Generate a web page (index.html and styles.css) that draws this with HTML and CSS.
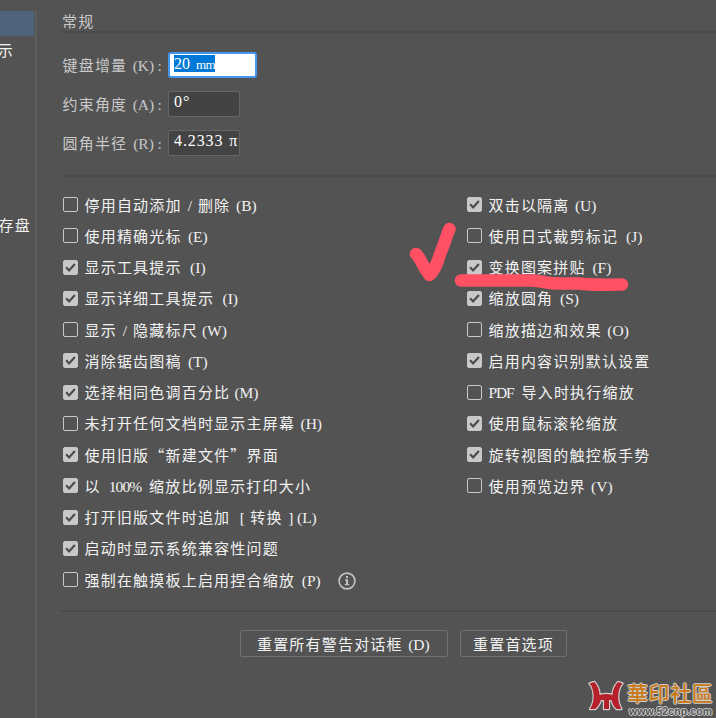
FILE: index.html
```html
<!DOCTYPE html>
<html lang="zh-CN">
<head>
<meta charset="utf-8">
<title>首选项</title>
<link rel="stylesheet" href="styles.css">
</head>
<body>
<svg class="defs" width="0" height="0"><symbol id="tick" viewBox="0 0 16 16"><path d="M2.6 7.800 6.300 11.700 13.400 3.800" fill="none" stroke="#4b4b4b" stroke-width="2.7"/></symbol></svg>
<div class="window">
  <aside class="sidebar">
    <div class="tab active"></div>
    <div class="tab view">示</div>
    <div class="tab save">存盘</div>
  </aside>
  <main class="panel">
    <h1>常规</h1>
    <section class="fields">
      <label class="field focus"><span class="name">键盘增量<span class="en key">(K)</span><span class="en colon">:</span></span><span class="input en"><span class="sel">20 <span class="unit">mm</span></span></span></label>
      <label class="field"><span class="name">约束角度<span class="en key">(A)</span><span class="en colon">:</span></span><span class="input en">0°</span></label>
      <label class="field"><span class="name">圆角半径<span class="en key">(R)</span><span class="en colon">:</span></span><span class="input en">4.2333 <span class="last">π</span></span></label>
    </section>
    <section class="options">
      <div class="column">
        <div class="option"><span class="box"></span><span>停用自动添加<span class="en slash">/</span>删除<span class="en key">(B)</span></span></div>
        <div class="option"><span class="box"></span><span>使用精确光标<span class="en key">(E)</span></span></div>
        <div class="option"><span class="box on"><svg><use href="#tick"/></svg></span><span>显示工具提示<span class="en key">(I)</span></span></div>
        <div class="option"><span class="box on"><svg><use href="#tick"/></svg></span><span>显示详细工具提示<span class="en key">(I)</span></span></div>
        <div class="option"><span class="box"></span><span>显示<span class="en slash">/</span>隐藏标尺<span class="en key">(W)</span></span></div>
        <div class="option"><span class="box on"><svg><use href="#tick"/></svg></span><span>消除锯齿图稿<span class="en key">(T)</span></span></div>
        <div class="option"><span class="box on"><svg><use href="#tick"/></svg></span><span>选择相同色调百分比<span class="en key">(M)</span></span></div>
        <div class="option"><span class="box"></span><span>未打开任何文档时显示主屏幕<span class="en key">(H)</span></span></div>
        <div class="option"><span class="box on"><svg><use href="#tick"/></svg></span><span>使用旧版“新建文件”界面</span></div>
        <div class="option"><span class="box on"><svg><use href="#tick"/></svg></span><span>以<span class="en percent">100%</span>缩放比例显示打印大小</span></div>
        <div class="option"><span class="box on"><svg><use href="#tick"/></svg></span><span>打开旧版文件时追加<span class="en open">[</span>转换<span class="en close">]</span><span class="en key tight">(L)</span></span></div>
        <div class="option"><span class="box on"><svg><use href="#tick"/></svg></span><span>启动时显示系统兼容性问题</span></div>
        <div class="option"><span class="box"></span><span>强制在触摸板上启用捏合缩放<span class="en key">(P)</span></span>
          <svg class="info" viewBox="0 0 18 18"><circle cx="9" cy="9" r="7.9" fill="none" stroke="#c4c4c4" stroke-width="1.6"/><path d="M8 4h2v2H8zM7 7.3h3v4.7h1.2v1.3H6.8V12H8V8.6H7z" fill="#c4c4c4"/></svg></div>
      </div>
      <div class="column">
        <div class="option"><span class="box on"><svg><use href="#tick"/></svg></span><span>双击以隔离<span class="en key">(U)</span></span></div>
        <div class="option"><span class="box"></span><span>使用日式裁剪标记<span class="en key">(J)</span></span></div>
        <div class="option"><span class="box on"><svg><use href="#tick"/></svg></span><span>变换图案拼贴<span class="en key">(F)</span></span></div>
        <div class="option"><span class="box on"><svg><use href="#tick"/></svg></span><span>缩放圆角<span class="en key">(S)</span></span></div>
        <div class="option"><span class="box"></span><span>缩放描边和效果<span class="en key">(O)</span></span></div>
        <div class="option"><span class="box on"><svg><use href="#tick"/></svg></span><span>启用内容识别默认设置</span></div>
        <div class="option"><span class="box"></span><span><span class="en pdf">PDF</span>导入时执行缩放</span></div>
        <div class="option"><span class="box on"><svg><use href="#tick"/></svg></span><span>使用鼠标滚轮缩放</span></div>
        <div class="option"><span class="box on"><svg><use href="#tick"/></svg></span><span>旋转视图的触控板手势</span></div>
        <div class="option"><span class="box"></span><span>使用预览边界<span class="en key">(V)</span></span></div>
      </div>
    </section>
    <footer class="actions">
      <button class="alerts">重置所有警告对话框<span class="en key">(D)</span></button>
      <button class="prefs">重置首选项</button>
    </footer>
  </main>
  <svg class="marks" viewBox="0 0 716 718">
    <g fill="none" stroke="#ff5163" stroke-linecap="round" stroke-linejoin="round">
      <path stroke-width="12.5" d="M416 254C420 257 423 267 429.5 275C436 270 438 259 442 249C445 242 447 234 449.500 229"/>
      <path stroke-width="12.5" d="M461 280.500H531C545 281 545 283.500 560 283.500H578C590 285 596 285 622 284.500"/>
    </g>
  </svg>
  <div class="watermark">
    <svg class="logo" viewBox="4 6 36 36"><path d="M5.500 9.500 10.500 8C14 12 15.500 16 15.500 21Q22 19 28.500 21C28.500 16 30.500 12 34 8L38.500 9.500C33.500 15 32.500 27 37.500 35H32.500C30 33 28.500 30 27.500 26H25V35H20V26H17C15.500 30 14 33 11 35H6C11.500 27 10.500 15 5.500 9.500Z" fill="#b5202a" stroke="#cfcfcf" stroke-width="2.4" stroke-linejoin="round" paint-order="stroke"/></svg>
    <div class="brand"><div class="title">華印社區</div><div class="url">www.52cnp.com</div></div>
  </div>
</div>
</body>
</html>
```
FILE: styles.css
```css
* { box-sizing: border-box; }
body {
  margin: 0;
  background: #535353;
  color: #f2f2f2;
  font: 15px/20px "Noto Sans CJK SC", sans-serif;
  letter-spacing: 1.2px;
  white-space: nowrap;
}
.defs { position: absolute; }
.window { position: relative; width: 716px; height: 718px; display: flex; overflow: hidden; }
.en {
  font-family: "Liberation Serif", serif;
  font-size: 15.5px;
  letter-spacing: 0;
  white-space: pre;
}
.key, .slash, .open, .close, .colon, .percent, .pdf { display: inline-block; text-align: center; line-height: 18px; }
.key { width: 24.3px; margin-left: 4px; }
.tight { margin-left: 0; }
.slash { width: 8.2px; margin: 0 4px; }
.open { width: 8px; margin: 0 4px 0 8px; }
.close { width: 8px; margin-left: 4px; }
.colon { width: 8px; }
.percent { width: 32.4px; margin: 0 8px; letter-spacing: -0.9px; }
.pdf { width: 25px; margin-right: 8px; letter-spacing: -1.2px; }

.sidebar { width: 37px; flex: none; margin-top: 11px; border-right: 2px solid #5e5e5e; overflow: hidden; }
.tab { height: 25px; display: flex; align-items: center; justify-content: flex-end; }
.active { background: #4f647b; margin-right: 1px; }
.view { padding-right: 21px; margin-top: 1px; }
.save { padding-right: 4px; margin-top: 150px; }

.panel { flex: 1; margin-left: 24px; padding-top: 10px; }
h1 { margin: 0; height: 23px; padding-left: 1px; border-bottom: 2px solid #4b4b4b; font-size: 15px; font-weight: 400; line-height: 21px; color: #c9c9c9; }
.fields { height: 144px; padding: 19px 0 0 1.5px; border-bottom: 2px solid #4b4b4b; display: flex; flex-direction: column; gap: 13px; }
.field { display: flex; height: 26px; }
.name { width: 105.5px; color: #c9c9c9; padding-top: 3px; }
.input { width: 72px; border: 1px solid #656565; border-radius: 2px; background: #434343; color: #fff; padding: 0 0 0 5px; line-height: 20px; letter-spacing: 0.9px; font-size: 16px; }
.last { margin-left: 1px; letter-spacing: 0; }
.focus .input { width: 89px; background: #fff; border: 2px solid #4596ed; border-radius: 3px; padding: 1px 0 0 4px; line-height: 17px; letter-spacing: 0; }
.sel { display: inline-block; width: 41px; height: 17px; background: #0078d7; }
.unit { font-size: 13px; letter-spacing: -0.6px; margin-left: 2px; }

.options { height: 435px; padding: 12px 0 0 1.5px; border-bottom: 2px solid #4b4b4b; display: grid; grid-template-columns: 404px 1fr; align-items: start; }
.option { height: 31.25px; display: flex; align-items: center; }
.box { width: 15px; height: 15px; border: 1px solid #c8c8c8; border-radius: 2px; margin-right: 7px; flex: none; display: flex; }
.on { background: #c8c8c8; }
.on svg { width: 13px; height: 13px; }
.info { width: 18px; height: 18px; margin: 2px 0 0 15px; }

.actions { display: flex; gap: 12px; padding: 18px 0 0 179px; }
button { height: 27px; padding: 0; border: 1px solid #707070; border-radius: 2px; background: none; color: #f2f2f2; font: inherit; letter-spacing: inherit; }
.alerts { width: 208px; }
.prefs { width: 107px; }

.marks { position: absolute; inset: 0; width: 716px; height: 718px; }
.watermark { position: absolute; right: 0; bottom: 0; display: flex; gap: 3px; }
.logo { width: 36px; height: 36px; }
.brand { width: 89px; height: 38px; text-shadow: 1px 0 #ccc, -1px 0 #ccc, 0 1px #ccc, 0 -1px #ccc; }
.title { font: 500 21px/24px "Noto Sans CJK TC", sans-serif; letter-spacing: 0.6px; color: #c97a16; }
.url { font: 700 10.5px/14px "Liberation Sans", sans-serif; letter-spacing: 0.1px; color: #555; padding-left: 2px; }
```
